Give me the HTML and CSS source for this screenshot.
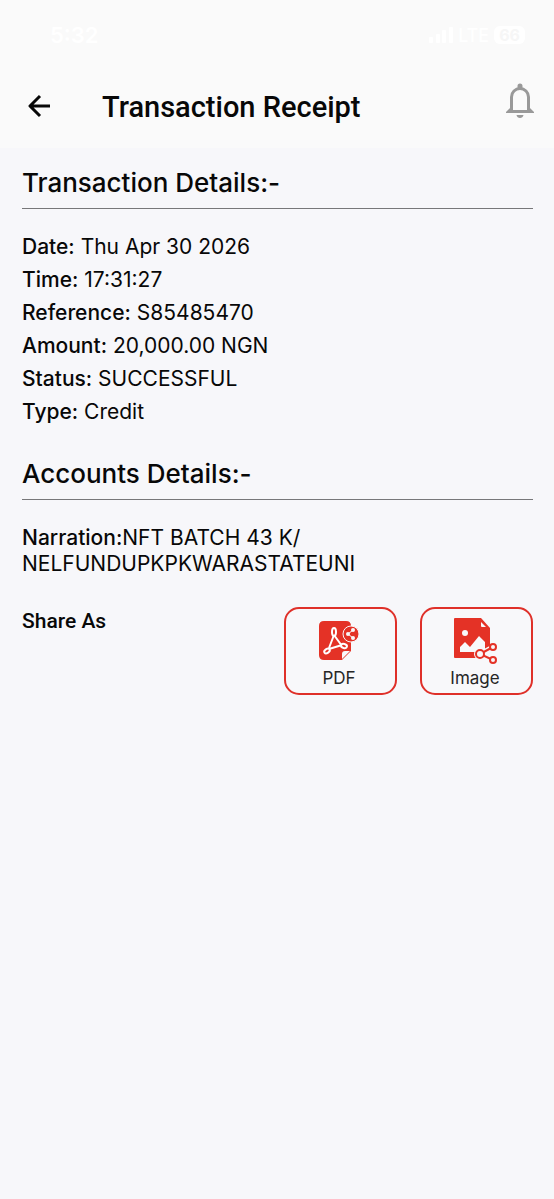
FILE: index.html
```html
<!DOCTYPE html>
<html lang="en">
<head>
<meta charset="utf-8">
<meta name="viewport" content="width=device-width, initial-scale=1">
<title>Transaction Receipt</title>
<link rel="stylesheet" href="styles.css">
</head>
<body>
<header class="top">
  <div class="status">
    <span class="clock">5:32</span>
    <span class="signals">
      <svg class="bars" viewBox="0 0 24 18" aria-hidden="true"><rect x="0" y="11" width="4" height="6" rx="1"/><rect x="7" y="8" width="4" height="9" rx="1"/><rect x="13" y="4" width="4" height="13" rx="1"/><rect x="20" y="1" width="4" height="16" rx="1"/></svg>
      <span>LTE</span>
      <span class="battery">66</span>
    </span>
  </div>
  <div class="bar">
    <button class="icon-button" type="button" aria-label="Back">
      <svg class="back" viewBox="0 0 24 24" aria-hidden="true"><path d="M12 2 2 12l10 10M2 12h20"/></svg>
    </button>
    <h1 class="title">Transaction Receipt</h1>
    <button class="icon-button bell-button" type="button" aria-label="Notifications">
      <svg class="bell" viewBox="0 0 30 36" aria-hidden="true"><path class="bell-line" d="M6.500 28V14a8.500 8.500 0 0 1 17 0v14"/><path d="M12.500 6V3a2.500 2.500 0 0 1 5 0v3zM1 30v-1l5-5h2v3h14v-3h2l5 5v1zM11.500 32h7c-.5 4-6.500 4-7 0z"/></svg>
    </button>
  </div>
</header>
<main class="content">
  <section>
    <h2 class="heading">Transaction Details:-</h2>
    <dl class="details">
      <div><dt>Date:</dt> <dd>Thu Apr 30 2026</dd></div>
      <div><dt>Time:</dt> <dd>17:31:27</dd></div>
      <div><dt>Reference:</dt> <dd>S85485470</dd></div>
      <div><dt>Amount:</dt> <dd>20,000.00 NGN</dd></div>
      <div><dt>Status:</dt> <dd>SUCCESSFUL</dd></div>
      <div><dt>Type:</dt> <dd>Credit</dd></div>
    </dl>
  </section>
  <section>
    <h2 class="heading">Accounts Details:-</h2>
    <dl class="details narration">
      <div><dt>Narration:</dt><dd>NFT BATCH 43 K/<wbr>NELFUNDUPKPKWARASTATEUNI</dd></div>
    </dl>
  </section>
  <section class="share">
    <h3 class="share-label">Share As</h3>
    <div class="share-options">
      <button class="option" type="button">
        <svg class="option-icon" viewBox="0 0 46 50" aria-hidden="true">
          <path class="red" d="M8 6h22q5 0 5 5v25l-9 9H8q-5 0-5-5V11q0-5 5-5z"/>
          <path class="paper" d="M26 44v-5q0-3 3-3h5z"/>
          <path class="white-line" d="M18 20 13 33M18 20l8 11M13 34l13-4"/>
          <g class="loops"><ellipse cx="18" cy="17" rx="2" ry="4"/><ellipse cx="11" cy="36" rx="3" ry="2" transform="rotate(-35 11 36)"/><ellipse cx="28" cy="31" rx="3" ry="2" transform="rotate(15 28 31)"/></g>
          <circle class="badge" cx="35" cy="19" r="8"/>
          <path class="share-line" d="m37 15-5 4 5 4"/>
          <g class="paper"><circle cx="37" cy="15" r="2"/><circle cx="32" cy="19" r="2"/><circle cx="37" cy="23" r="2"/></g>
        </svg>
        <span>PDF</span>
      </button>
      <button class="option" type="button">
        <svg class="option-icon" viewBox="0 0 46 50" aria-hidden="true">
          <path class="red" d="M3 3h26l9 10v18l-12 12H3q-1 0-1-1V4q0-1 1-1z"/>
          <path class="paper" d="M29 7v4q0 1 1 1h4z"/>
          <circle class="paper" cx="13" cy="18" r="3"/>
          <path class="paper" d="M8 37v-5l5-5 5 5 9-11 6 6v10z"/>
          <path class="link-halo" d="m41 32-13 7 13 6"/>
          <circle class="paper" cx="28" cy="39" r="6"/>
          <path class="link-line" d="m41 32-13 7 13 6"/>
          <g class="node"><circle cx="41" cy="32" r="3"/><circle cx="28" cy="39" r="4"/><circle cx="41" cy="45" r="3"/></g>
        </svg>
        <span>Image</span>
      </button>
    </div>
  </section>
</main>
</body>
</html>
```
FILE: styles.css
```css
* { box-sizing: border-box; }
body {
  margin: 0;
  min-height: 100vh;
  background: #f7f7fa;
  color: #080808;
  font-family: Inter, "Liberation Sans", sans-serif;
}
h1, h2, h3, dl, dt, dd { margin: 0; }
button { font: inherit; color: inherit; cursor: pointer; }
svg { display: block; }
.top { background: #fafafa; }
.status {
  display: flex;
  align-items: center;
  justify-content: space-between;
  height: 70px;
  padding: 0 29px 0 50px;
  color: #ffffff;
}
.clock { font-size: 22px; font-weight: 600; }
.signals { display: flex; align-items: center; gap: 5px; font-size: 18px; font-weight: 500; }
.bars { width: 24px; height: 18px; fill: #ffffff; }
.battery {
  padding: 0 5px;
  border-radius: 6px;
  background: #ffffff;
  color: #f6f6f6;
  font-size: 16px;
  font-weight: 700;
  line-height: 18px;
}
.bar {
  display: flex;
  align-items: center;
  height: 78px;
  padding: 0 18px 4px 28px;
}
.icon-button { padding: 0; border: 0; background: none; }
.back {
  width: 24px;
  height: 24px;
  margin-bottom: 2px;
  fill: none;
  stroke: #080808;
  stroke-width: 3;
  stroke-linejoin: round;
}
.title {
  flex: 1;
  padding-left: 50px;
  font: 500 29px/36px Roboto, sans-serif;
}
.bell-button { padding-bottom: 12px; }
.bell { width: 32px; height: 36px; fill: #999999; }
.bell-line { fill: none; stroke: #999999; stroke-width: 3; }
.content { padding: 19px 21px 20px 22px; }
.heading {
  padding-bottom: 9px;
  border-bottom: 1px solid #777779;
  font-size: 26px;
  font-weight: 500;
  line-height: 32px;
}
.details { padding: 21px 0 30px; font-size: 21px; line-height: 33px; }
.details dt, .details dd { display: inline; }
.details dt { font-weight: 500; }
.narration { padding: 25px 0 30px; line-height: 26px; }
.share { display: flex; justify-content: space-between; }
.share-label { font: 500 21px/28px Roboto, sans-serif; }
.share-options { display: flex; gap: 23px; }
.option {
  display: flex;
  flex-direction: column;
  align-items: center;
  width: 113px;
  padding: 6px 3px 2px 0;
  border: 2px solid #df3029;
  border-radius: 15px;
  background: #f8f8fa;
  color: #262626;
  font-size: 17px;
  line-height: 26px;
}
.option-icon { width: 46px; height: 50px; }
.red { fill: #e43226; }
.paper { fill: #f8f8fa; }
.white-line { fill: none; stroke: #ffffff; stroke-width: 2; }
.loops { fill: #e43226; stroke: #ffffff; stroke-width: 2; }
.badge { fill: #e43226; stroke: #f8f8fa; stroke-width: 1; }
.share-line { fill: none; stroke: #ffffff; stroke-width: 1; }
.link-halo { fill: none; stroke: #f8f8fa; stroke-width: 5; }
.link-line { fill: none; stroke: #e43226; stroke-width: 2; }
.node { fill: #f8f8fa; stroke: #e43226; stroke-width: 2; }
```
